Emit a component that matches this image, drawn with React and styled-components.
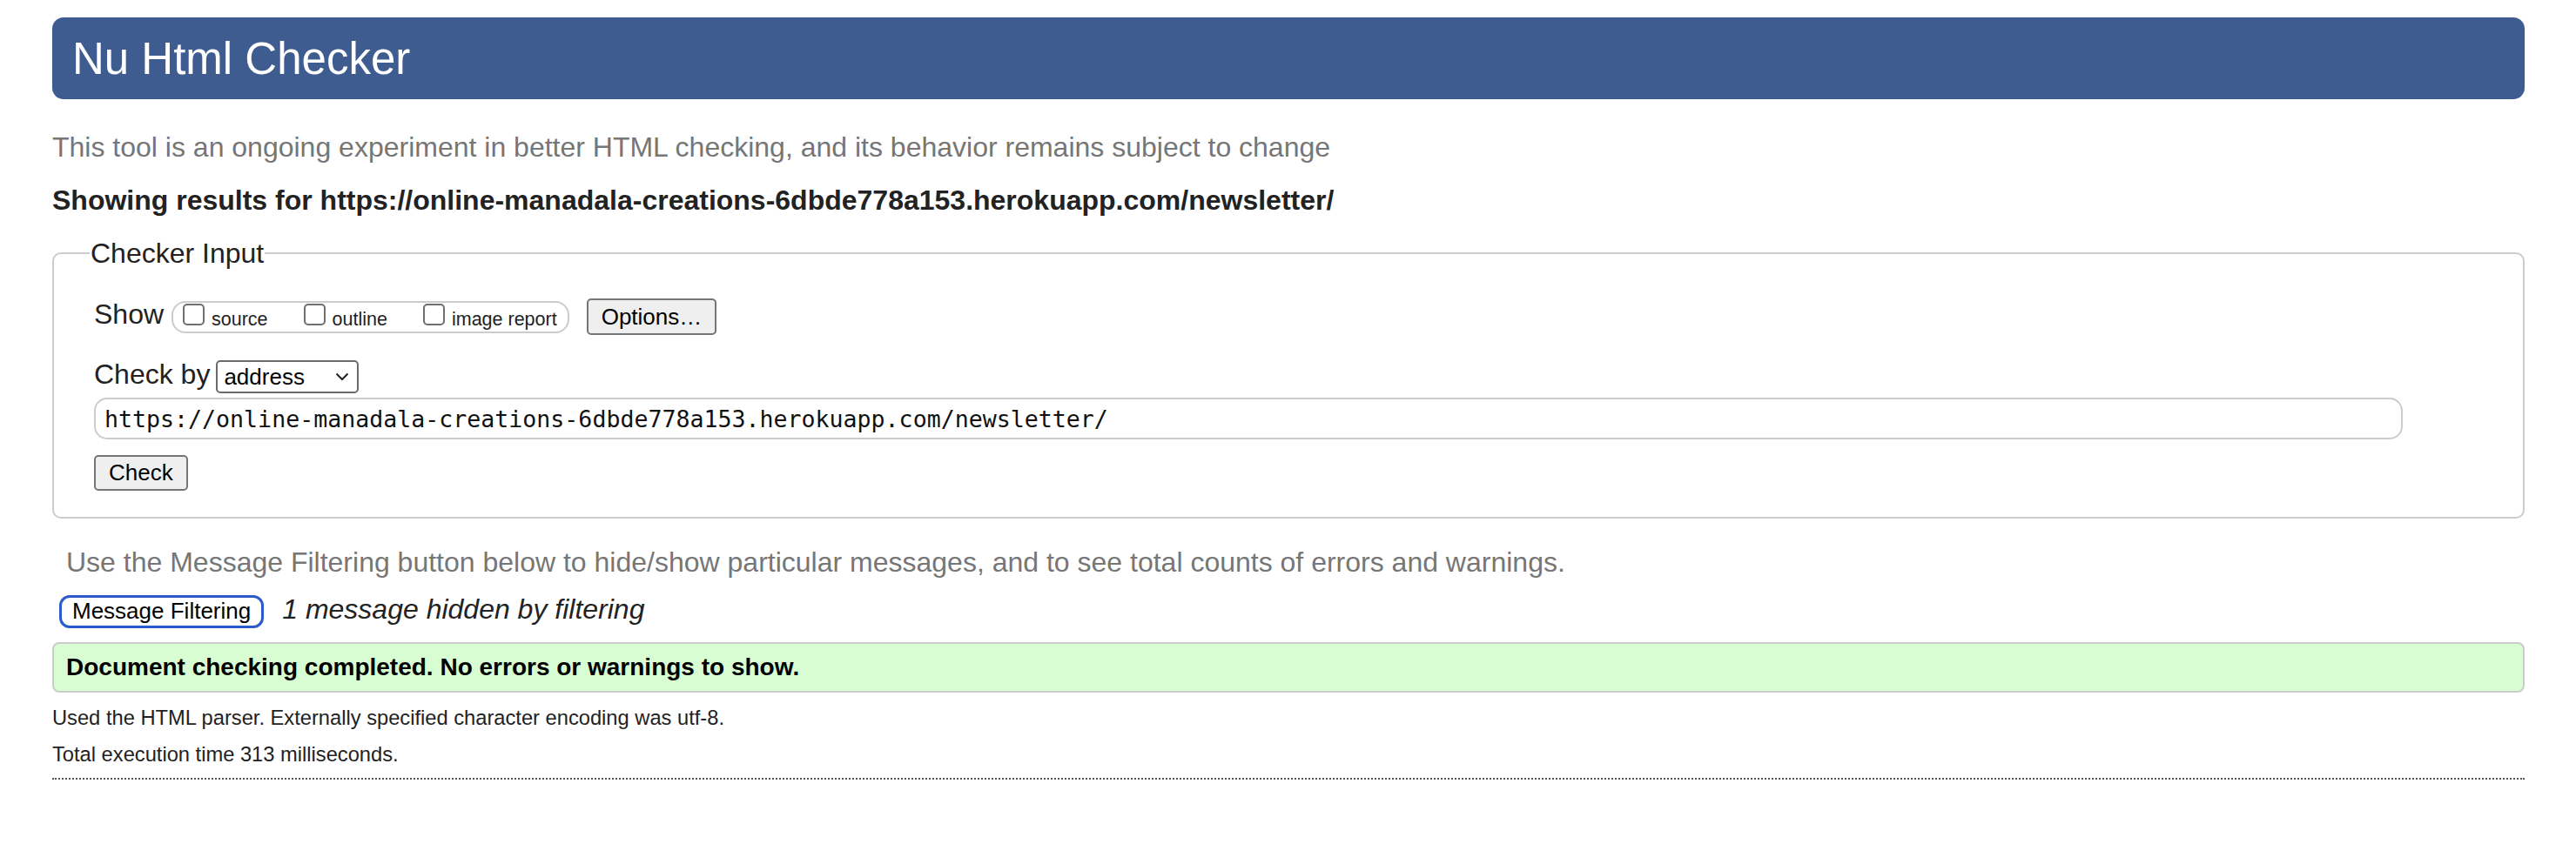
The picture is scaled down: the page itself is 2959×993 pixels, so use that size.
import React from 'react'
import styled, { createGlobalStyle } from 'styled-components'

const Global = createGlobalStyle`
  body {
    margin: 0;
    background: #fff;
    color: #222;
    font-family: "Liberation Sans", Arial, Helvetica, sans-serif;
  }
`

const Page = styled.div`
  padding: 20px 59px 40px 60px;
`

const Header = styled.header`
  height: 94px;
  display: flex;
  align-items: center;
  padding-left: 23px;
  background: #3e5c8f;
  border-radius: 13px;
`
const Title = styled.h1`
  margin: 0;
  font-size: 51px;
  font-weight: normal;
  color: #fff;
`

const Lead = styled.p`
  margin: 35px 0 0;
  font-size: 32px;
  line-height: 40px;
  color: #767676;
`
const ResultsFor = styled.h2`
  margin: 21px 0 0;
  font-size: 32px;
  line-height: 40px;
  font-weight: bold;
  color: #222;
`

const Fieldset = styled.fieldset`
  margin: 21px 0 0;
  padding: 32px 46px 30px;
  min-width: 0;
  border: 2px solid #ccc;
  border-radius: 10px;
`
const Legend = styled.legend`
  margin-left: -5px;
  padding: 0 1px;
  font-size: 32px;
  line-height: 40px;
  color: #222;
`

const Row = styled.div`
  display: flex;
  align-items: center;
  margin-top: ${p => p.$top || 0}px;
`
const Label = styled.span`
  font-size: 32px;
  line-height: 32px;
  padding-bottom: 6px;
  margin-right: ${p => p.$gap}px;
`

const ShowGroup = styled.div`
  display: flex;
  align-items: center;
  height: 33px;
  padding: 0 12px 0 11px;
  border: 2px solid #ccc;
  border-radius: 16px;
`
const Choice = styled.label`
  display: flex;
  align-items: baseline;
  gap: 8px;
  font-size: 21.5px;
  line-height: 26px;
  color: #222;
  & + & {
    margin-left: 41px;
  }
`
const Box = styled.input`
  appearance: none;
  margin: 0;
  width: 25px;
  height: 25px;
  border: 2px solid #6f6f6f;
  border-radius: 5px;
  background: #fff;
`

const Button = styled.button`
  height: ${p => p.$h}px;
  margin-left: ${p => p.$left || 0}px;
  padding: 0 ${p => p.$pad}px;
  font-family: "Liberation Sans", Arial, sans-serif;
  font-size: 26px;
  color: #000;
  background: #efefef;
  border: 2px solid #767676;
  border-radius: 5px;
`

const SelectWrap = styled.div`
  position: relative;
  width: 164px;
  height: 38px;
`
const Select = styled.select`
  appearance: none;
  width: 100%;
  height: 100%;
  padding: 0 0 0 7px;
  font-family: "Liberation Sans", Arial, sans-serif;
  font-size: 26px;
  color: #000;
  background: #fff;
  border: 2px solid #6a6a6a;
  border-radius: 5px;
`
const Chevron = styled.svg`
  position: absolute;
  right: 11px;
  top: 14px;
  pointer-events: none;
`

const UrlInput = styled.input`
  display: block;
  box-sizing: border-box;
  width: calc(100% - 92px);
  height: 48px;
  margin-top: 5px;
  padding: 0 10px;
  font-family: "DejaVu Sans Mono", "Liberation Mono", monospace;
  font-size: 26.6px;
  color: #111;
  border: 2px solid #ccc;
  border-radius: 15px;
  outline: none;
`

const FilterHint = styled.p`
  margin: 30px 0 0;
  padding-left: 16px;
  font-size: 32px;
  line-height: 40px;
  color: #767676;
`
const FilterRow = styled.div`
  display: flex;
  align-items: center;
  margin-top: 16px;
  padding-left: 8px;
`
const FilterButton = styled.button`
  height: 38px;
  padding: 0 12px;
  font-family: "Liberation Sans", Arial, sans-serif;
  font-size: 26px;
  color: #000;
  background: #fff;
  border: 3px solid #2a5bcb;
  border-radius: 12px;
`
const HiddenNote = styled.span`
  margin-left: 21px;
  padding-bottom: 4px;
  font-size: 32px;
  font-style: italic;
  color: #222;
`

const Success = styled.div`
  display: flex;
  align-items: center;
  height: 54px;
  margin-top: 15px;
  padding: 0 14px;
  font-size: 28px;
  font-weight: bold;
  color: #000;
  background: #d8fdd2;
  border: 2px solid #ccc;
  border-radius: 8px;
`

const Details = styled.p`
  margin: ${p => p.$top}px 0 0;
  font-size: 23.7px;
  line-height: 32px;
  color: #222;
`
const Rule = styled.hr`
  margin: 11px 0 0;
  border: 0;
  border-top: 2px dotted #555;
`

const url = 'https://online-manadala-creations-6dbde778a153.herokuapp.com/newsletter/'

export default function App() {
  return (
    <Page>
      <Global />
      <Header>
        <Title>Nu Html Checker</Title>
      </Header>
      <Lead>
        This tool is an ongoing experiment in better HTML checking, and its behavior remains subject to change
      </Lead>
      <ResultsFor>Showing results for {url}</ResultsFor>

      <Fieldset>
        <Legend>Checker Input</Legend>
        <Row>
          <Label $gap={9}>Show</Label>
          <ShowGroup>
            <Choice>
              <Box type="checkbox" />
              source
            </Choice>
            <Choice>
              <Box type="checkbox" />
              outline
            </Choice>
            <Choice>
              <Box type="checkbox" />
              image report
            </Choice>
          </ShowGroup>
          <Button $h={42} $pad={15} $left={20}>Options…</Button>
        </Row>
        <Row $top={29}>
          <Label $gap={7}>Check by</Label>
          <SelectWrap>
            <Select defaultValue="address">
              <option value="address">address</option>
              <option value="file">file upload</option>
              <option value="text">text input</option>
            </Select>
            <Chevron width="16" height="10" viewBox="0 0 16 10">
              <path d="M1.5 1.5 L8 8 L14.5 1.5" fill="none" stroke="#222" strokeWidth="2" />
            </Chevron>
          </SelectWrap>
        </Row>
        <UrlInput type="url" defaultValue={url} />
        <Row $top={18}>
          <Button $h={41} $pad={15}>Check</Button>
        </Row>
      </Fieldset>

      <FilterHint>
        Use the Message Filtering button below to hide/show particular messages, and to see total counts of errors and warnings.
      </FilterHint>
      <FilterRow>
        <FilterButton>Message Filtering</FilterButton>
        <HiddenNote>1 message hidden by filtering</HiddenNote>
      </FilterRow>

      <Success>Document checking completed. No errors or warnings to show.</Success>

      <Details $top={13}>Used the HTML parser. Externally specified character encoding was utf-8.</Details>
      <Details $top={10}>Total execution time 313 milliseconds.</Details>
      <Rule />
    </Page>
  )
}
